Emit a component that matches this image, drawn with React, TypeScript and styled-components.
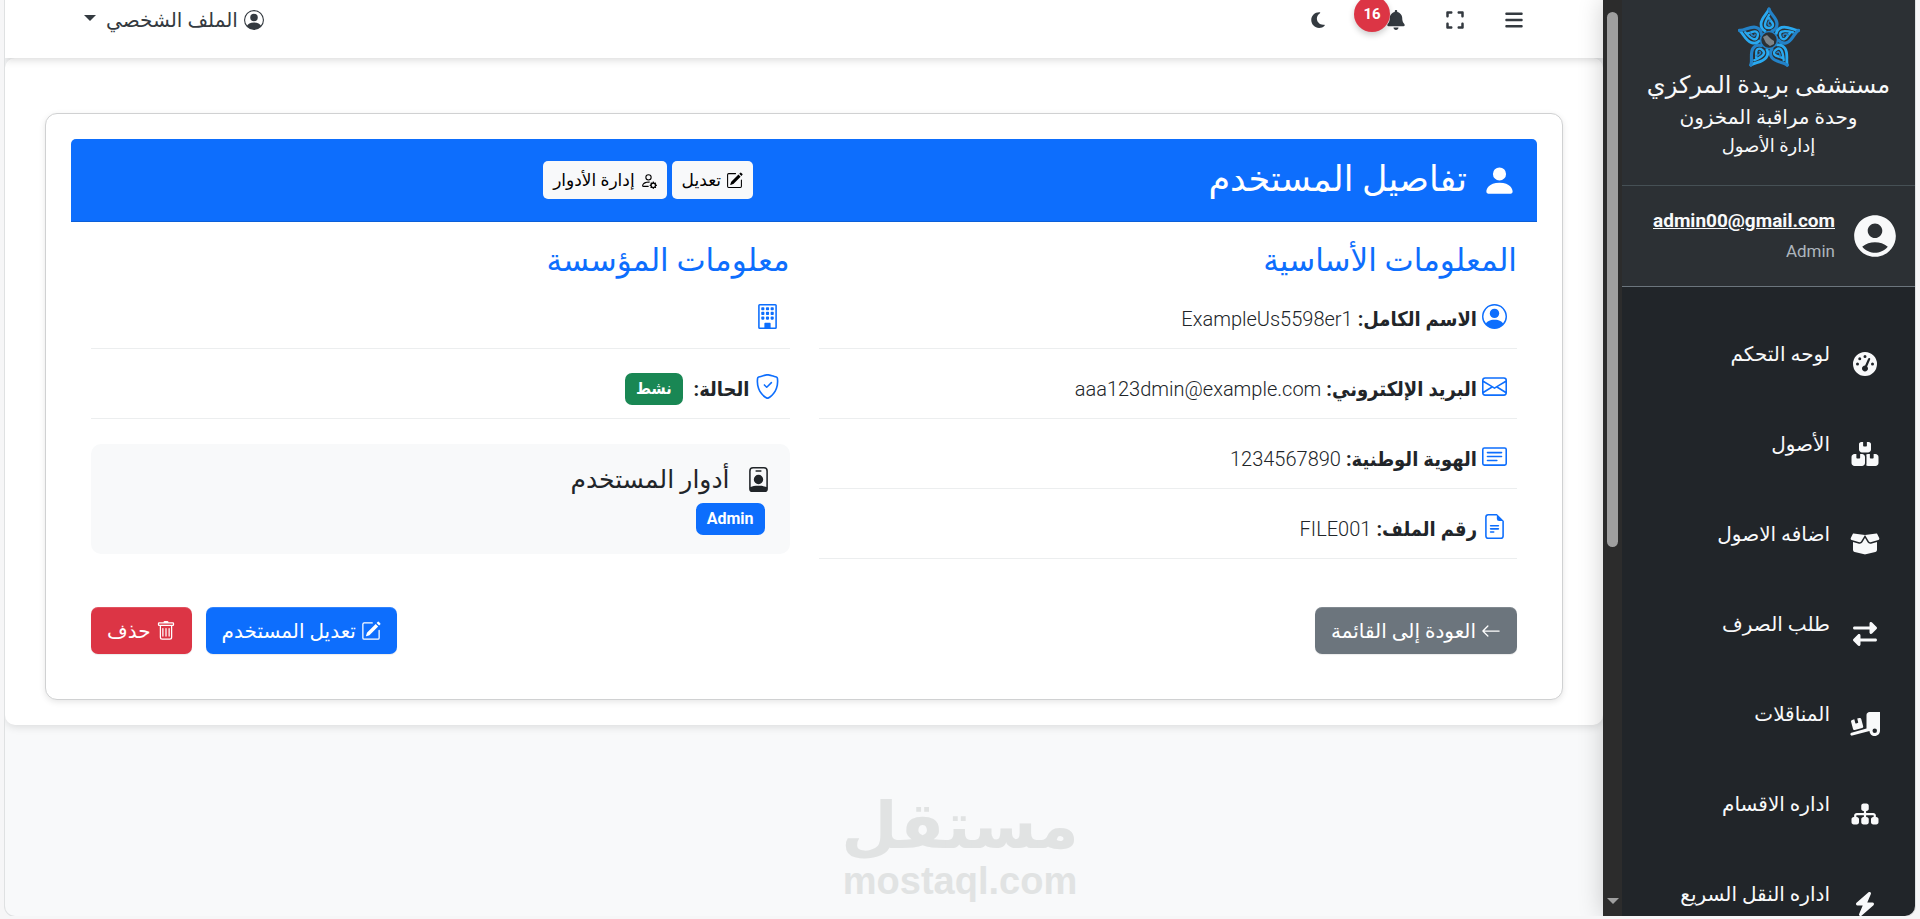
import React from 'react';
import styled, { createGlobalStyle } from 'styled-components';
import {
  BsPersonFill, BsPencilSquare, BsPersonGear, BsPersonCircle, BsEnvelope, BsCardText,
  BsFileEarmarkText, BsBuilding, BsShieldCheck, BsPersonBadge, BsTrash, BsArrowLeft,
} from 'react-icons/bs';
import {
  FaBars, FaExpand, FaBell, FaMoon, FaGaugeHigh, FaBoxesStacked, FaBoxOpen,
  FaRightLeft, FaTruckRampBox, FaSitemap, FaBolt,
} from 'react-icons/fa6';
import { MdAccountCircle } from 'react-icons/md';

const GlobalStyle = createGlobalStyle`
  *, *::before, *::after { box-sizing: border-box; }
  body {
    margin: 0;
    background: #f6f6f7;
    color: #212529;
    font-family: Roboto, "DejaVu Sans", sans-serif;
    font-size: 20px;
    line-height: 30px;
  }
  h1, h2, h3, p, ul, dl, dd { margin: 0; padding: 0; font-weight: 400; }
  ul { list-style: none; }
  button { font-family: inherit; cursor: pointer; }
  a { color: inherit; text-decoration: none; }
  svg { display: block; flex: none; }
`;

const Shell = styled.div`
  display: flex;
  height: calc(100vh - 3px);
  margin: 0 5px;
  overflow: hidden;
  background: #f8f9fa;
  border-radius: 0 0 10px 10px;
  box-shadow: 0 0 0 1px #dfe1e2;
`;

const Sidebar = styled.aside`
  display: flex;
  flex: none;
  width: 312px;
  background: #212529;
  color: #f8f9fa;
  box-shadow: 0 0 24px rgba(0, 0, 0, 0.2);
  z-index: 1;
`;

const SidebarBody = styled.div`
  flex: 1;
  min-width: 0;
  overflow: hidden;
`;

const ScrollTrack = styled.div`
  display: flex;
  flex-direction: column;
  justify-content: space-between;
  align-items: center;
  width: 19px;
  padding: 12px 0;
  background: #2c2c2c;
`;

const ScrollThumb = styled.div`
  width: 11px;
  height: 60%;
  border-radius: 6px;
  background: #9f9f9f;
`;

const ScrollArrow = styled.div`
  border: 6px solid transparent;
  border-top-color: #9f9f9f;
  border-bottom: 0;
`;

const Brand = styled.header`
  display: flex;
  flex-direction: column;
  align-items: center;
  height: 186px;
  padding-top: 7px;
  background: #2c3034;
  border-bottom: 1px solid #465055;
`;

const BrandTitle = styled.h1`
  font-size: 24px;
  line-height: 32px;
`;

const BrandUnit = styled.p`
  font-size: 20px;
  line-height: 32px;
`;

const BrandDepartment = styled.p`
  font-size: 18px;
  line-height: 26px;
`;

const UserPanel = styled.section`
  display: flex;
  align-items: center;
  gap: 15px;
  height: 101px;
  padding: 0 15px;
  background: #2c3034;
  border-bottom: 1px solid #6c757d;
`;

const UserAvatar = styled(MdAccountCircle)`
  width: 50px;
  height: 50px;
`;

const UserText = styled.div`
  display: flex;
  flex-direction: column;
  align-items: flex-start;
`;

const UserEmail = styled.a`
  font-size: 19px;
  line-height: 30px;
  font-weight: 700;
  text-decoration: underline;
`;

const UserRole = styled.span`
  color: #adb5bd;
  font-size: 17px;
  line-height: 30px;
`;

const NavList = styled.ul`
  padding: 35px 35px 0;
`;

const NavLink = styled.a`
  display: flex;
  gap: 20px;
  height: 90px;
  padding-top: 17px;

  svg {
    width: 30px;
    margin-top: 13px;
  }
`;

const Main = styled.main`
  flex: 1;
  min-width: 0;
`;

const TopBar = styled.nav`
  display: flex;
  justify-content: space-between;
  align-items: center;
  height: 58px;
  padding: 0 79px 18px;
  background: #fff;
  color: #343a40;
  box-shadow: 0 2px 8px rgba(0, 0, 0, 0.15);
  position: relative;
`;

const ToolGroup = styled.div`
  display: flex;
  align-items: center;
  gap: 39px;
`;

const IconButton = styled.button`
  position: relative;
  display: flex;
  padding: 0;
  border: 0;
  background: none;
  color: inherit;
`;

const AlertButton = styled(IconButton)`
  margin-left: 20px;
`;

const Counter = styled.span`
  position: absolute;
  right: 16px;
  bottom: -2px;
  width: 36px;
  height: 36px;
  border-radius: 50%;
  background: #dc3545;
  color: #fff;
  font-size: 15px;
  font-weight: 700;
  line-height: 36px;
  text-align: center;
  box-shadow: 0 3px 6px rgba(0, 0, 0, 0.2);
`;

const ProfileButton = styled.button`
  display: flex;
  align-items: center;
  gap: 6px;
  padding: 0;
  border: 0;
  background: none;
  color: inherit;
  font-size: 20px;

  &::after {
    content: '';
    margin: 0 4px 4px 0;
    border: 6px solid transparent;
    border-top-color: currentColor;
    border-bottom: 0;
  }
`;

const Content = styled.div`
  padding: 55px 40px 25px;
  background: #fff;
  border-radius: 10px;
  box-shadow: 0 2px 8px rgba(0, 0, 0, 0.12);
`;

const Card = styled.article`
  padding: 25px;
  border: 1px solid #d0d1d2;
  border-radius: 12px;
  background: #fff;
  box-shadow: 0 2px 6px rgba(0, 0, 0, 0.1);
`;

const CardHeader = styled.header`
  display: grid;
  grid-template-columns: 15fr 13fr;
  align-items: center;
  height: 83px;
  padding: 0 20px;
  background: #0d6efd;
  border-bottom: 1px solid #0c5fd8;
  border-radius: 5px 5px 0 0;
  color: #fff;
`;

const CardTitle = styled.h2`
  display: flex;
  align-items: center;
  gap: 15px;
  font-size: 35px;
  line-height: 48px;
`;

const HeaderActions = styled.div`
  display: flex;
  gap: 5px;
`;

const SmallButton = styled.button`
  display: flex;
  align-items: center;
  gap: 5px;
  height: 38px;
  padding: 0 10px;
  border: 0;
  border-radius: 5px;
  background: #f8f9fa;
  color: #000;
  font-size: 17px;
`;

const CardBody = styled.div`
  padding: 20px;
`;

const Columns = styled.div`
  display: grid;
  grid-template-columns: 1fr 1fr;
  gap: 29px;
`;

const SectionTitle = styled.h3`
  color: #0d6efd;
  font-size: 31px;
  line-height: 37px;
`;

const InfoRow = styled.div`
  display: flex;
  align-items: center;
  gap: 5px;
  height: 70px;
  padding: 10px 10px 0;
  border-bottom: 1px solid #eceeef;

  svg {
    margin-bottom: 4px;
    color: #0d6efd;
  }

  dt {
    font-family: Roboto, "DejaVu Sans Condensed", "DejaVu Sans", sans-serif;
    font-weight: 700;
  }

  dd { font-weight: 300; }
`;

const Badge = styled.span<{ $tone: 'success' | 'primary' }>`
  display: inline-block;
  padding: 0 11px;
  border-radius: 7px;
  background: ${({ $tone }) => ($tone === 'success' ? '#198754' : '#0d6efd')};
  color: #fff;
  font-family: Roboto, "DejaVu Sans Condensed", "DejaVu Sans", sans-serif;
  font-size: 16px;
  font-weight: 700;
  line-height: 32px;
`;

const StatusValue = styled.dd`
  display: flex;
  padding-right: 6px;
`;

const RolesBox = styled.section`
  margin-top: 25px;
  padding: 18px 25px 19px;
  background: #f8f9fa;
  border-radius: 10px;
`;

const RolesTitle = styled.h3`
  display: flex;
  align-items: center;
  gap: 16px;
  margin: 0 -6px 6px 0;
  font-size: 25px;
  line-height: 35px;
`;

const RoleList = styled.div`
  display: flex;
`;

const Actions = styled.footer`
  display: flex;
  justify-content: space-between;
  margin-top: 48px;
`;

const ActionGroup = styled.div`
  display: flex;
  gap: 14px;
`;

const tones = { secondary: '#6c757d', primary: '#0d6efd', danger: '#dc3545' };

const ActionButton = styled.button<{ $tone: keyof typeof tones }>`
  display: flex;
  align-items: center;
  gap: 5px;
  height: 47px;
  padding: 0 16px;
  border: 0;
  border-radius: 7px;
  background: ${({ $tone }) => tones[$tone]};
  color: #fff;
  font-size: 20px;
  box-shadow: inset 0 1px 0 rgba(255, 255, 255, 0.15), 0 1px 1px rgba(0, 0, 0, 0.08);
`;

const Watermark = styled.div`
  position: absolute;
  bottom: 18px;
  left: 50%;
  transform: translateX(-50%);
  color: #e1e3e3;
  font-weight: 700;
  text-align: center;
  pointer-events: none;
`;

const WatermarkName = styled.div`
  font-family: "DejaVu Sans", sans-serif;
  font-size: 65px;
  line-height: 70px;
`;

const WatermarkSite = styled.div`
  font-family: "Liberation Sans", sans-serif;
  font-size: 38px;
  line-height: 40px;
`;

const BrandLogo = () => (
  <svg width="64" height="62" viewBox="-32 -33 64 62" fill="none" aria-hidden="true">
    {[0, 72, 144, 216, 288].map((angle) => (
      <g key={angle} transform={`rotate(${angle})`} strokeLinecap="round">
        <path d="M0 -31C-2 -26 -8 -22 -8 -16C-8 -12 -6 -10 -4 -9" stroke="#29a9f0" strokeWidth="2.8" />
        <path d="M0 -31C1 -26 8 -22 8 -16C8 -12 6 -10 3 -9" stroke="#2382c8" strokeWidth="3.2" />
        <path d="M0 -25C-3 -20 -4 -18 -4 -15C-4 -11 4 -11 4 -15C4 -18 1 -19 0 -22" stroke="#29a9f0" strokeWidth="2.4" />
        <path d="M1 -20C-2 -17 -1 -14 1 -15" stroke="#2382c8" strokeWidth="1.6" />
      </g>
    ))}
    <circle r="8.5" stroke="#2382c8" strokeWidth="1.6" fill="#2c3034" />
    <path d="M-6 -3L-2 -5L2 -1L5 1L5 4L1 6L-3 3Z" fill="#7c8388" />
  </svg>
);

const BadgeIcon = () => (
  <svg width="25" height="25" viewBox="0 0 16 16" fill="currentColor" aria-hidden="true">
    <path d="M6.5 2a.5.5 0 0 0 0 1h3a.5.5 0 0 0 0-1zM11 8a3 3 0 1 1-6 0 3 3 0 0 1 6 0" />
    <path d="M4.5 0A2.500 2.500 0 0 0 2 2.500V14a2 2 0 0 0 2 2h8a2 2 0 0 0 2-2V2.500A2.500 2.500 0 0 0 11.500 0zM3 2.500A1.500 1.500 0 0 1 4.500 1h7A1.500 1.500 0 0 1 13 2.500v10.300C12 12.200 10.400 12 8 12s-4 .2-5 .8z" />
  </svg>
);

const navItems = [
  { label: 'لوحه التحكم', Icon: FaGaugeHigh },
  { label: 'الأصول', Icon: FaBoxesStacked },
  { label: 'اضافه الاصول', Icon: FaBoxOpen },
  { label: 'طلب الصرف', Icon: FaRightLeft },
  { label: 'المناقلات', Icon: FaTruckRampBox },
  { label: 'اداره الاقسام', Icon: FaSitemap },
  { label: 'اداره النقل السريع', Icon: FaBolt },
];

const basicInfo = [
  { label: 'الاسم الكامل:', value: 'ExampleUs5598er1', Icon: BsPersonCircle },
  { label: 'البريد الإلكتروني:', value: 'aaa123dmin@example.com', Icon: BsEnvelope },
  { label: 'الهوية الوطنية:', value: '1234567890', Icon: BsCardText },
  { label: 'رقم الملف:', value: 'FILE001', Icon: BsFileEarmarkText },
];

export default function App() {
  return (
    <>
      <GlobalStyle />
      <Shell dir="rtl" lang="ar">
        <Sidebar>
          <SidebarBody>
            <Brand>
              <BrandLogo />
              <BrandTitle>مستشفى بريدة المركزي</BrandTitle>
              <BrandUnit>وحدة مراقبة المخزون</BrandUnit>
              <BrandDepartment>إدارة الأصول</BrandDepartment>
            </Brand>
            <UserPanel>
              <UserAvatar />
              <UserText>
                <UserEmail href="#profile">admin00@gmail.com</UserEmail>
                <UserRole>Admin</UserRole>
              </UserText>
            </UserPanel>
            <nav>
              <NavList>
                {navItems.map(({ label, Icon }) => (
                  <li key={label}>
                    <NavLink href="#">
                      <Icon size={24} />
                      <span>{label}</span>
                    </NavLink>
                  </li>
                ))}
              </NavList>
            </nav>
          </SidebarBody>
          <ScrollTrack aria-hidden="true">
            <ScrollThumb />
            <ScrollArrow />
          </ScrollTrack>
        </Sidebar>

        <Main>
          <TopBar>
            <ToolGroup>
              <IconButton aria-label="القائمة"><FaBars size={20} /></IconButton>
              <IconButton aria-label="ملء الشاشة"><FaExpand size={20} /></IconButton>
              <AlertButton aria-label="الإشعارات">
                <FaBell size={20} />
                <Counter>16</Counter>
              </AlertButton>
              <IconButton aria-label="الوضع الليلي"><FaMoon size={18} /></IconButton>
            </ToolGroup>
            <ProfileButton>
              <BsPersonCircle size={20} />
              الملف الشخصي
            </ProfileButton>
          </TopBar>

          <Content>
            <Card>
              <CardHeader>
                <CardTitle><BsPersonFill size={35} />تفاصيل المستخدم</CardTitle>
                <HeaderActions>
                  <SmallButton><BsPencilSquare size={17} />تعديل</SmallButton>
                  <SmallButton><BsPersonGear size={17} />إدارة الأدوار</SmallButton>
                </HeaderActions>
              </CardHeader>
              <CardBody>
                <Columns>
                  <section>
                    <SectionTitle>المعلومات الأساسية</SectionTitle>
                    <dl>
                      {basicInfo.map(({ label, value, Icon }) => (
                        <InfoRow key={label}>
                          <Icon size={25} />
                          <dt>{label}</dt>
                          <dd>{value}</dd>
                        </InfoRow>
                      ))}
                    </dl>
                  </section>
                  <section>
                    <SectionTitle>معلومات المؤسسة</SectionTitle>
                    <dl>
                      <InfoRow><BsBuilding size={25} /></InfoRow>
                      <InfoRow>
                        <BsShieldCheck size={25} />
                        <dt>الحالة:</dt>
                        <StatusValue><Badge $tone="success">نشط</Badge></StatusValue>
                      </InfoRow>
                    </dl>
                    <RolesBox>
                      <RolesTitle><BadgeIcon />أدوار المستخدم</RolesTitle>
                      <RoleList><Badge $tone="primary">Admin</Badge></RoleList>
                    </RolesBox>
                  </section>
                </Columns>
                <Actions>
                  <ActionButton $tone="secondary"><BsArrowLeft size={20} />العودة إلى القائمة</ActionButton>
                  <ActionGroup>
                    <ActionButton $tone="primary"><BsPencilSquare size={20} />تعديل المستخدم</ActionButton>
                    <ActionButton $tone="danger"><BsTrash size={20} />حذف</ActionButton>
                  </ActionGroup>
                </Actions>
              </CardBody>
            </Card>
          </Content>
        </Main>
      </Shell>
      <Watermark>
        <WatermarkName lang="ar">مستقل</WatermarkName>
        <WatermarkSite>mostaql.com</WatermarkSite>
      </Watermark>
    </>
  );
}
